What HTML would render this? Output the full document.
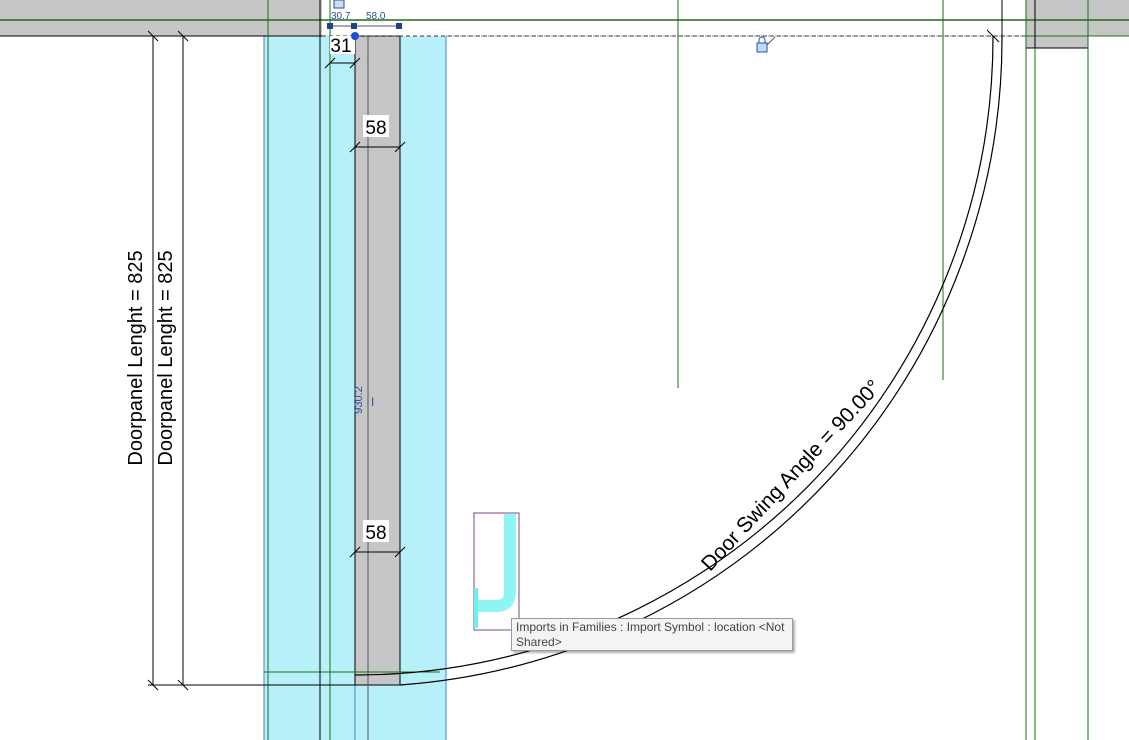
<!DOCTYPE html>
<html><head><style>
body{margin:0;width:1129px;height:740px;overflow:hidden;background:#fff;font-family:"Liberation Sans",sans-serif}
.tip{position:absolute;left:511px;top:618px;width:282px;height:33px;background:#f4f4f4;border:1px solid #9a9a9a;box-shadow:2px 2px 2px rgba(0,0,0,.3);font-size:12px;color:#444;line-height:15px;padding:1px 4px;box-sizing:border-box}
</style></head><body>
<svg width="1129" height="740" style="position:absolute;left:0;top:0" font-family="Liberation Sans, sans-serif">
<rect x="0" y="0" width="322" height="36" fill="#c6c6c6"/>
<rect x="267" y="36" width="55" height="12" fill="#c6c6c6"/>
<line x1="267" y1="48" x2="322" y2="48" stroke="#000"/>
<rect x="1026" y="0" width="103" height="36" fill="#c6c6c6"/>
<rect x="1026" y="36" width="62" height="12" fill="#c6c6c6"/>
<line x1="1026" y1="48" x2="1088" y2="48" stroke="#000"/>
<rect x="264" y="36" width="182" height="704" fill="#b8f0fa"/>
<line x1="264" y1="36" x2="264" y2="740" stroke="#4a7fd0"/>
<line x1="446" y1="36" x2="446" y2="740" stroke="#4a7fd0"/>
<line x1="355" y1="36" x2="355" y2="740" stroke="#4a7fd0"/>
<rect x="355" y="36" width="45" height="649" fill="#c6c6c6" stroke="#000"/>
<line x1="368" y1="36" x2="368" y2="740" stroke="#555"/>
<line x1="0" y1="20" x2="1129" y2="20" stroke="#1a6e1a" stroke-width="1.5"/>
<line x1="322" y1="36" x2="1026" y2="36" stroke="#333" stroke-dasharray="4,3"/>
<line x1="446" y1="36" x2="1026" y2="36" stroke="#5ab" stroke-dasharray="2,5"/>
<line x1="0" y1="36" x2="322" y2="36" stroke="#000"/>
<line x1="1026" y1="36" x2="1129" y2="36" stroke="#1a6e1a"/>
<line x1="264" y1="672" x2="440" y2="672" stroke="#1a6e1a"/>
<line x1="268" y1="36" x2="268" y2="740" stroke="#1a6e1a"/>
<line x1="268" y1="0" x2="268" y2="48" stroke="#1a6e1a"/>
<line x1="320" y1="0" x2="320" y2="740" stroke="#000"/>
<line x1="330" y1="0" x2="330" y2="740" stroke="#1a6e1a"/>
<line x1="678" y1="0" x2="678" y2="388" stroke="#1a6e1a"/>
<line x1="943" y1="0" x2="943" y2="380" stroke="#1a6e1a"/>
<line x1="1002" y1="0" x2="1002" y2="36" stroke="#000"/>
<line x1="1026" y1="0" x2="1026" y2="740" stroke="#1a6e1a"/>
<line x1="1035" y1="0" x2="1035" y2="740" stroke="#1a6e1a"/>
<line x1="1088" y1="0" x2="1088" y2="740" stroke="#1a6e1a"/>
<line x1="1035" y1="0" x2="1035" y2="48" stroke="#000"/>
<path d="M355 675 A638 638 0 0 0 993 36" fill="none" stroke="#000" stroke-width="1.2"/>
<path d="M400 685 A648 648 0 0 0 1002 36" fill="none" stroke="#000" stroke-width="1.2"/>
<line x1="987" y1="30" x2="999" y2="42" stroke="#000"/>
<text x="0" y="0" font-size="21" transform="translate(796,480) rotate(-47)" text-anchor="middle">Door Swing Angle = 90.00°</text>
<line x1="153" y1="36" x2="153" y2="685" stroke="#000"/>
<line x1="183" y1="36" x2="183" y2="685" stroke="#000"/>
<line x1="148" y1="685" x2="355" y2="685" stroke="#000"/>
<line x1="148" y1="31" x2="158" y2="41" stroke="#000"/><line x1="178" y1="31" x2="188" y2="41" stroke="#000"/>
<line x1="148" y1="680" x2="158" y2="690" stroke="#000"/><line x1="178" y1="680" x2="188" y2="690" stroke="#000"/>
<text font-size="20" transform="translate(142,358) rotate(-90)" text-anchor="middle">Doorpanel Lenght = 825</text>
<text font-size="20" transform="translate(172,358) rotate(-90)" text-anchor="middle">Doorpanel Lenght = 825</text>
<line x1="355" y1="147" x2="400" y2="147" stroke="#000"/>
<line x1="350" y1="152" x2="360" y2="142" stroke="#000"/><line x1="395" y1="152" x2="405" y2="142" stroke="#000"/>
<rect x="363" y="115" width="26" height="22" fill="#fff"/><text x="376" y="134" font-size="19" text-anchor="middle">58</text>
<line x1="355" y1="552" x2="400" y2="552" stroke="#000"/>
<line x1="350" y1="557" x2="360" y2="547" stroke="#000"/><line x1="395" y1="557" x2="405" y2="547" stroke="#000"/>
<rect x="363" y="520" width="26" height="22" fill="#fff"/><text x="376" y="539" font-size="19" text-anchor="middle">58</text>
<line x1="330" y1="63" x2="355" y2="63" stroke="#000"/>
<line x1="325" y1="68" x2="335" y2="58" stroke="#000"/><line x1="350" y1="68" x2="360" y2="58" stroke="#000"/>
<rect x="330" y="36" width="25" height="18" fill="#fff"/><text x="341" y="52" font-size="19" text-anchor="middle">31</text>
<line x1="330" y1="26" x2="400" y2="26" stroke="#555"/>
<rect x="327" y="23" width="6" height="6" fill="#1f3f8f"/><rect x="351" y="23" width="6" height="6" fill="#1f3f8f"/><rect x="396" y="23" width="6" height="6" fill="#1f3f8f"/>
<circle cx="355" cy="36" r="4" fill="#1a4fd0"/>
<text x="331" y="19" font-size="10" fill="#2a4fa0">30.7</text>
<text x="366" y="19" font-size="10" fill="#2a4fa0">58.0</text>
<rect x="334" y="0" width="10" height="8" fill="#cde" stroke="#2a4fa0"/>
<text font-size="11" fill="#2a4fa0" transform="translate(362,400) rotate(-90)" text-anchor="middle">930.2</text>
<text x="371" y="406" font-size="12" fill="#2a4fa0">I</text>
<rect x="757" y="43" width="10" height="9" fill="#bdf" stroke="#2a4fa0"/>
<path d="M759 43 v-3 a3 3 0 0 1 6 0 v3" fill="none" stroke="#2a4fa0"/>
<line x1="767" y1="45" x2="775" y2="37" stroke="#555"/>
<rect x="474" y="513" width="45" height="117" fill="#fff" stroke="#7a4a8a"/>
<path d="M510 514 V592 Q510 606 496 606 H476" fill="none" stroke="#8ff4f4" stroke-width="12"/>
<line x1="476" y1="588" x2="476" y2="628" stroke="#6ff0f0" stroke-width="4"/>
</svg>
<div class="tip">Imports in Families : Import Symbol : location &lt;Not Shared&gt;</div>
</body></html>
